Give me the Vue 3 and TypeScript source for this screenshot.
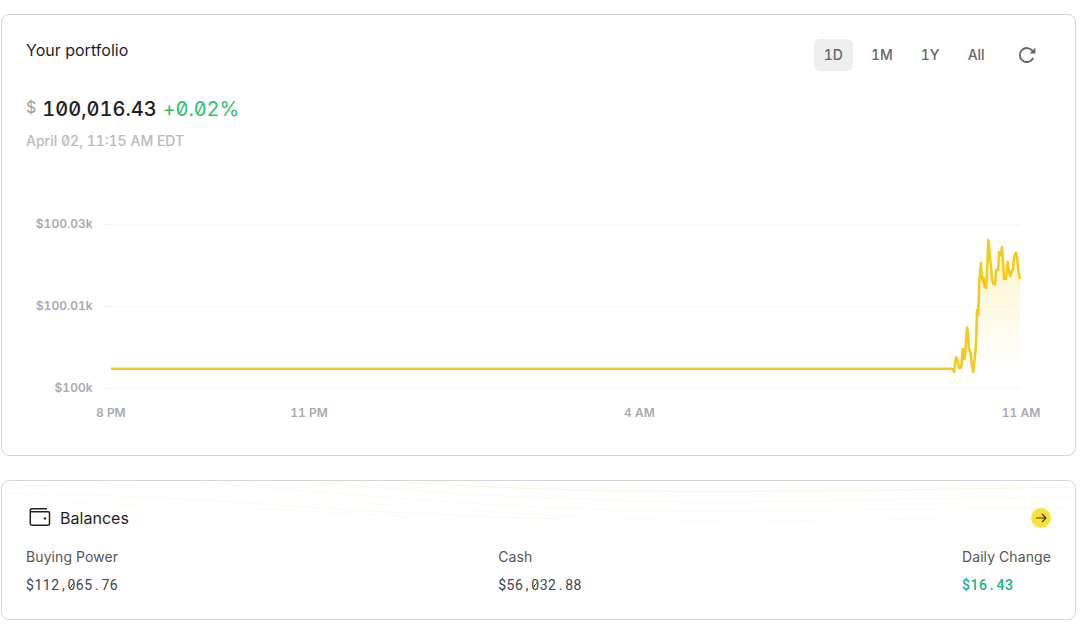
<script setup lang="ts">
import { ref } from 'vue'

interface Tick { label: string; pos: number }
interface Part { text: string; kind: string }
interface Balance { label: string; amount: string; up?: boolean }

const ranges: string[] = ['1D', '1M', '1Y', 'All']
const active = ref('1D')

const yTicks: Tick[] = [
  { label: '$100.03k', pos: 24.5 },
  { label: '$100.01k', pos: 106.5 },
  { label: '$100k', pos: 188.5 },
]
const xTicks: Tick[] = [
  { label: '8 PM', pos: 110.8 },
  { label: '11 PM', pos: 309 },
  { label: '4 AM', pos: 639.5 },
  { label: '11 AM', pos: 1021 },
]

const points: [number, number][] = [
  [111, 168.8], [951, 168.8], [953, 169.5], [954, 172], [955, 164], [956, 157.5], [957.5, 160],
  [959, 168], [960.5, 168], [961.5, 165], [962.5, 149], [963.5, 152], [964.5, 159], [965.5, 148],
  [967, 127.5], [968, 133], [969, 149], [970.5, 153], [972, 166], [973.3, 172], [974.5, 160],
  [975.5, 151], [976.3, 136], [977, 110], [978.3, 115], [979.2, 82], [981, 63], [981.8, 76],
  [982.8, 82], [983.7, 78], [984.5, 87], [986.3, 88], [987.2, 66], [988.3, 40], [989.3, 48],
  [990, 61], [991, 64], [992, 80], [993.5, 84], [995, 84.5], [996.2, 70], [998, 70],
  [999.3, 52], [1000.5, 55], [1002, 47], [1003, 61], [1004, 79], [1006, 79], [1007.7, 62],
  [1009, 72], [1010.5, 76], [1012, 70], [1013, 70], [1014, 57], [1016, 52.5],
  [1017.5, 61], [1018.5, 72], [1020, 79],
]
const line = 'M' + points.map(([x, y]) => `${x} ${y}`).join('L')
const area = line + 'V169H111Z'

const balances: Balance[] = [
  { label: 'Buying Power', amount: '$112,065.76' },
  { label: 'Cash', amount: '$56,032.88' },
  { label: 'Daily Change', amount: '$16.43', up: true },
]

// Splits an amount so that separators get a full digit cell and zeros get a slash
function parts(amount: string): Part[] {
  return (amount.match(/[,.]|0|[^,.0]+/g) ?? []).map((text) => ({
    text,
    kind: text === '0' ? 'zero' : text === ',' || text === '.' ? 'sep' : 'num',
  }))
}
</script>

<template>
  <main class="page">
    <section class="card portfolio">
      <header class="top">
        <h2>Your portfolio</h2>
        <nav class="ranges">
          <button v-for="r in ranges" :key="r" :class="{ on: r === active }" @click="active = r">{{ r }}</button>
          <svg class="refresh" width="20" height="20" viewBox="0 0 20 20">
            <path d="M16.2 13A7 7 0 1 1 15.8 6.3" fill="none" stroke="#666" stroke-width="1.9" />
            <path d="M18.4 2.6V8.4H12.6Z" fill="#666" />
          </svg>
        </nav>
      </header>
      <div class="equity">
        <span class="cur">$</span><span class="total">100,016.43</span><span class="gain">+0.02%</span>
      </div>
      <p class="date">April 02, 11:15 AM EDT</p>
      <svg class="chart" width="1074" height="230" viewBox="2 0 1074 230">
        <defs>
          <linearGradient id="fade" gradientUnits="userSpaceOnUse" x1="0" y1="40" x2="0" y2="169">
            <stop offset="0" stop-color="#f5cf18" stop-opacity=".25" />
            <stop offset="1" stop-color="#f5cf18" stop-opacity="0" />
          </linearGradient>
        </defs>
        <g v-for="t in yTicks" :key="t.label">
          <path :d="`M103 ${t.pos}H111`" stroke="#f3f3f3" />
          <path :d="`M111 ${t.pos}H1021`" stroke="#f3f3f3" stroke-dasharray="4 4" />
          <text x="92.5" :y="t.pos + 3.5" text-anchor="end">{{ t.label }}</text>
        </g>
        <text v-for="t in xTicks" :key="t.label" :x="t.pos" y="217" text-anchor="middle">{{ t.label }}</text>
        <path :d="area" fill="url(#fade)" />
        <path :d="line" fill="none" stroke="#f5c91a" stroke-width="2.5" stroke-linejoin="round" />
      </svg>
    </section>

    <section class="card balances">
      <svg class="waves" width="1074" height="60" viewBox="2 481 1074 60" fill="none">
        <path d="M403 482Q540 491.5 720 491.5Q850 491 1076 487" stroke="#fbf6da" />
        <path d="M310 482Q520 502 720 501.7Q870 500 1076 497.3" stroke="#fcf9e6" />
        <path d="M201 482C390 498 540 511.5 720 511.5Q900 509 1076 508" stroke="#fdfbef" />
        <path d="M2 484C220 485 420 515 720 521.5Q860 520 1020 518" stroke="#fdfcf4" />
        <path d="M2 493.5C200 494 320 513 560 519" stroke="#fcfaee" />
        <path d="M2 502.5Q160 503 410 516.5" stroke="#fdfcf3" />
        <path d="M2 511Q80 511 170 514" stroke="#fefdf7" />
      </svg>
      <header class="bal-head">
        <svg class="wallet" width="22" height="20" viewBox="0 0 22 20" fill="none" stroke="#222" stroke-width="1.5">
          <path d="M18 1.8H3Q1.3 1.8 1.3 3.2Q1.3 4.8 3 4.8H19.2Q20.5 4.8 20.5 6V16.8Q20.5 18.2 19.2 18.2H2.8Q1.3 18.2 1.3 16.8V3.2" />
          <circle cx="15.9" cy="11.4" r="1.2" fill="#222" stroke="none" />
        </svg>
        <h2>Balances</h2>
        <a class="go">
          <svg width="20" height="20" viewBox="0 0 20 20" fill="none" stroke="#3d3810" stroke-width="1.2">
            <path d="M5 10H15M11 6L15 10L11 14" />
          </svg>
        </a>
      </header>
      <div class="row">
        <div v-for="b in balances" :key="b.label">
          <div class="label">{{ b.label }}</div>
          <div class="value" :class="{ up: b.up }"><span v-for="(p, i) in parts(b.amount)" :key="i" :class="p.kind">{{ p.text }}</span></div>
        </div>
      </div>
    </section>
  </main>
</template>

<style>
body { background: #fff; }
</style>

<style scoped>
* { box-sizing: border-box; }
.page {
  width: 1086px; height: 625px; padding: 14px 10px 0 1px; overflow: hidden;
  display: flex; flex-direction: column; gap: 24px;
  font-family: Inter, sans-serif; font-feature-settings: 'tnum', 'zero'; color: #1f1f1f;
}
.card { border: 1px solid #d6d6d6; border-radius: 8px; position: relative; overflow: hidden; }
.portfolio { height: 442px; }
.balances { height: 140px; }
h2 { margin: 0; font-size: 16px; line-height: 24px; font-weight: 400; letter-spacing: .03px; }
.top { display: flex; justify-content: space-between; padding: 24px 38px 0 24px; height: 80px; }
.top h2 { line-height: 22px; }
.ranges { display: flex; height: 32px; align-items: center; }
.ranges button {
  border: 0; border-radius: 6px; height: 32px; padding: 0 10px; background: none; margin-right: 8px;
  font: 500 14px/20px Inter, sans-serif; font-feature-settings: inherit; color: #666;
}
.ranges .on { background: #eee; }
.refresh { margin-left: 14px; }
.ranges button:nth-of-type(4) { margin-right: 8.4px; }
.equity { display: flex; align-items: center; height: 28px; padding-left: 24px; }
.cur { font-size: 16px; color: #9b9b9b; margin: -5px 6px 0 0; }
.total { font-size: 20px; font-weight: 500; }
.gain { font-size: 20px; color: #30bf69; margin-left: 6px; letter-spacing: -.1px; }
.date { margin: 8px 0 0 24px; font-size: 14px; line-height: 20px; font-weight: 500; color: #bababa; }
.chart { display: block; margin-top: 49px; }
.chart text { font-size: 12px; font-weight: 600; fill: #a9a9ae; font-feature-settings: 'tnum'; }
.waves { position: absolute; left: 0; top: 0; }
.bal-head { position: relative; display: flex; align-items: center; height: 24px; margin: 25px 24px 0 27px; }
.bal-head h2 { margin-left: 9px; }
.wallet { margin-top: -2px; }
.go { margin-left: auto; width: 20px; height: 20px; border-radius: 50%; background: #fae03c; }
.go svg { display: block; }
.row { display: flex; justify-content: space-between; padding: 17px 24px 0; }
.label { font-size: 14px; line-height: 20px; color: #555; letter-spacing: .1px; }
.value { font: 400 14px/20px Roboto, sans-serif; letter-spacing: .54px; margin-top: 8px; color: #444; }
.sep { padding: 0 2.25px; }
.zero {
  background: linear-gradient(122deg, transparent 44%, currentColor 44%, currentColor 56%, transparent 56%) 2.2px 5px / 3.6px 7px no-repeat;
}
.value.up { color: #20b27c; font-weight: 500; }
</style>
